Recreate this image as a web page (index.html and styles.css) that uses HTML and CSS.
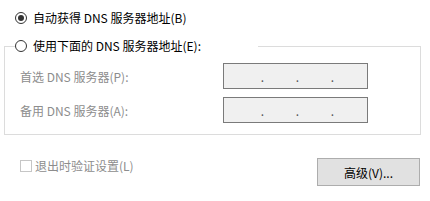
FILE: index.html
```html
<!DOCTYPE html>
<html lang="zh-CN">
<head>
    <meta charset="UTF-8">
    <meta name="viewport" content="width=device-width, initial-scale=1.0">
    <link rel="stylesheet" href="styles.css">
    <title>DNS 设置</title>
</head>
<body>
    <main class="dialog">
        <label class="option auto">
            <span class="radio checked"></span>
            <span>自动获得 DNS 服务器地址(B)</span>
        </label>

        <fieldset class="group">
            <legend class="option">
                <span class="radio"></span>
                <span>使用下面的 DNS 服务器地址(E):</span>
            </legend>
            <div class="fields">
                <div class="field">
                    <span class="field-label">首选 DNS 服务器(P):</span>
                    <div class="ip-box">
                        <span class="octet"></span><span class="dot">.</span>
                        <span class="octet"></span><span class="dot">.</span>
                        <span class="octet"></span><span class="dot">.</span>
                        <span class="octet"></span>
                    </div>
                </div>
                <div class="field">
                    <span class="field-label">备用 DNS 服务器(A):</span>
                    <div class="ip-box">
                        <span class="octet"></span><span class="dot">.</span>
                        <span class="octet"></span><span class="dot">.</span>
                        <span class="octet"></span><span class="dot">.</span>
                        <span class="octet"></span>
                    </div>
                </div>
            </div>
        </fieldset>

        <footer class="footer">
            <label class="check">
                <span class="checkbox"></span>
                <span>退出时验证设置(L)</span>
            </label>
            <button class="btn">高级(V)...</button>
        </footer>
    </main>
</body>
</html>
```

FILE: styles.css
```css
html{
    box-sizing: border-box;
    font-family: "Noto Sans CJK SC", "Microsoft YaHei", sans-serif;
    font-size: 12px;
}
*,
*:before,
*:after{
    box-sizing: inherit;
}
body{
    margin: 0;
    background-color: #fff;
    color: #000;
}
.option{
    display: flex;
    align-items: center;
    gap: 6px;
    height: 18px;
    line-height: 18px;
}
.auto{
    margin: 9px 0 0 15px;
}
.radio{
    width: 12px;
    height: 12px;
    border: 1px solid #333;
    border-radius: 50%;
    display: flex;
    align-items: center;
    justify-content: center;
}
.radio.checked:after{
    content: "";
    width: 6px;
    height: 6px;
    border-radius: 50%;
    background-color: #333;
}
.group{
    margin: 10px 9px 0 4px;
    padding: 0 0 11px;
    border: 1px solid #dcdcdc;
    min-width: 0;
}
.group legend{
    margin-left: 10px;
    padding: 0;
    width: 243px;
}
.fields{
    display: grid;
    row-gap: 8px;
    padding: 8px 0 0 15px;
}
.field{
    display: grid;
    grid-template-columns: 203px 145px;
    align-items: center;
}
.field-label,
.check{
    color: #8d8d8d;
}
.ip-box{
    height: 26px;
    display: flex;
    align-items: center;
    padding-left: 6px;
    border: 1px solid #7a7a7a;
    background-color: #f0f0f0;
}
.octet{
    width: 30px;
}
.dot{
    width: 5px;
    text-align: center;
    color: #555;
}
.footer{
    display: flex;
    justify-content: space-between;
    align-items: flex-start;
    padding: 22px 10px 0 20px;
}
.check{
    display: flex;
    align-items: center;
    gap: 3px;
    line-height: 18px;
}
.checkbox{
    width: 12px;
    height: 12px;
    border: 1px solid #c6c6c6;
    background-color: #fff;
}
.btn{
    margin-top: 1px;
    width: 103px;
    height: 28px;
    padding: 0;
    border: 1px solid #adadad;
    background-color: #e1e1e1;
    color: #000;
    font: inherit;
}
```
